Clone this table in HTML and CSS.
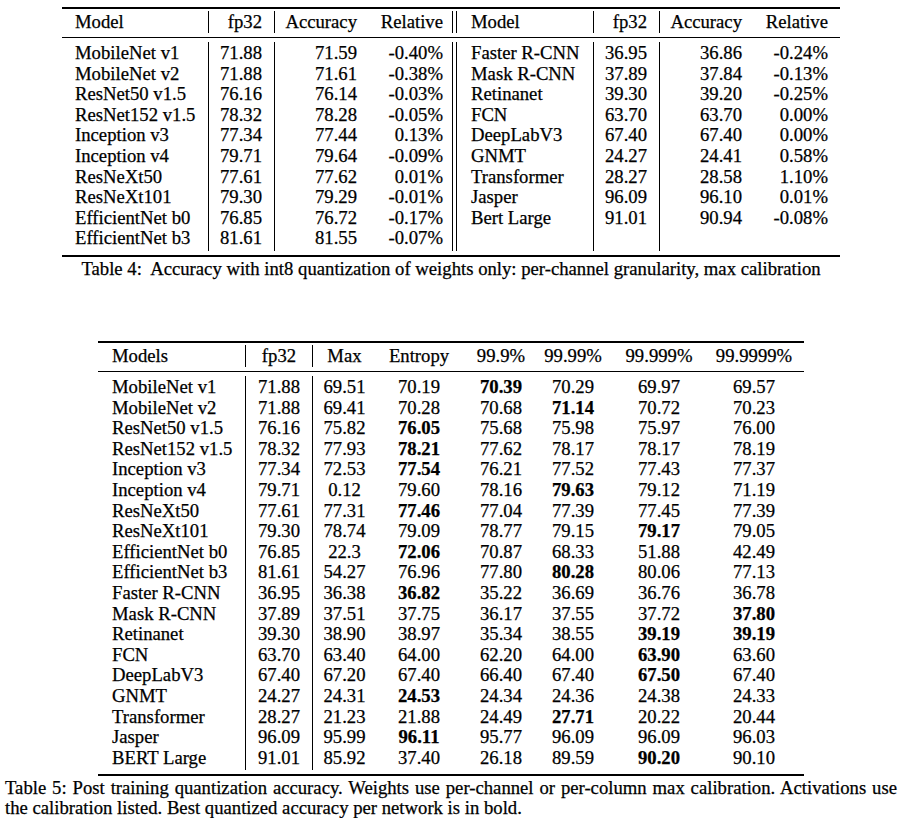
FILE: index.html
```html
<!DOCTYPE html>
<html>
<head>
<meta charset="utf-8">
<link rel="stylesheet" href="styles.css">
</head>
<body>
<div class="page">
  <div class="t4">
    <div class="rule thick top"></div>
    <div class="row head">
      <div class="m">Model</div><div class="r v">fp32</div><div class="r v">Accuracy</div><div class="r rl">Relative</div>
      <div class="dbl"></div>
      <div class="m m2">Model</div><div class="r v">fp32</div><div class="r v">Accuracy</div><div class="r">Relative</div>
    </div>
    <div class="rule mid"></div>
    <div class="row"><div class="m">MobileNet v1</div><div class="r v">71.88</div><div class="r v">71.59</div><div class="r rl">-0.40%</div><div class="dbl"></div><div class="m m2">Faster R-CNN</div><div class="r v">36.95</div><div class="r v">36.86</div><div class="r">-0.24%</div></div>
    <div class="row s"><div class="m">MobileNet v2</div><div class="r v">71.88</div><div class="r v">71.61</div><div class="r rl">-0.38%</div><div class="dbl"></div><div class="m m2">Mask R-CNN</div><div class="r v">37.89</div><div class="r v">37.84</div><div class="r">-0.13%</div></div>
    <div class="row"><div class="m">ResNet50 v1.5</div><div class="r v">76.16</div><div class="r v">76.14</div><div class="r rl">-0.03%</div><div class="dbl"></div><div class="m m2">Retinanet</div><div class="r v">39.30</div><div class="r v">39.20</div><div class="r">-0.25%</div></div>
    <div class="row s"><div class="m">ResNet152 v1.5</div><div class="r v">78.32</div><div class="r v">78.28</div><div class="r rl">-0.05%</div><div class="dbl"></div><div class="m m2">FCN</div><div class="r v">63.70</div><div class="r v">63.70</div><div class="r">0.00%</div></div>
    <div class="row"><div class="m">Inception v3</div><div class="r v">77.34</div><div class="r v">77.44</div><div class="r rl">0.13%</div><div class="dbl"></div><div class="m m2">DeepLabV3</div><div class="r v">67.40</div><div class="r v">67.40</div><div class="r">0.00%</div></div>
    <div class="row"><div class="m">Inception v4</div><div class="r v">79.71</div><div class="r v">79.64</div><div class="r rl">-0.09%</div><div class="dbl"></div><div class="m m2">GNMT</div><div class="r v">24.27</div><div class="r v">24.41</div><div class="r">0.58%</div></div>
    <div class="row s"><div class="m">ResNeXt50</div><div class="r v">77.61</div><div class="r v">77.62</div><div class="r rl">0.01%</div><div class="dbl"></div><div class="m m2">Transformer</div><div class="r v">28.27</div><div class="r v">28.58</div><div class="r">1.10%</div></div>
    <div class="row"><div class="m">ResNeXt101</div><div class="r v">79.30</div><div class="r v">79.29</div><div class="r rl">-0.01%</div><div class="dbl"></div><div class="m m2">Jasper</div><div class="r v">96.09</div><div class="r v">96.10</div><div class="r">0.01%</div></div>
    <div class="row s"><div class="m">EfficientNet b0</div><div class="r v">76.85</div><div class="r v">76.72</div><div class="r rl">-0.17%</div><div class="dbl"></div><div class="m m2">Bert Large</div><div class="r v">91.01</div><div class="r v">90.94</div><div class="r">-0.08%</div></div>
    <div class="row last"><div class="m">EfficientNet b3</div><div class="r v">81.61</div><div class="r v">81.55</div><div class="r rl">-0.07%</div><div class="dbl"></div><div class="m m2"></div><div class="r v"></div><div class="r v"></div><div class="r"></div></div>
    <div class="rule thick bot"></div>
  </div>
  <p class="cap4">Table 4:&nbsp; Accuracy with int8 quantization of weights only: per-channel granularity, max calibration</p>

  <div class="t5">
    <div class="rule thick top"></div>
    <div class="row head"><div class="m">Models</div><div class="c v">fp32</div><div class="c v">Max</div><div class="c">Entropy</div><div class="c">99.9%</div><div class="c">99.99%</div><div class="c">99.999%</div><div class="c">99.9999%</div><div></div></div>
    <div class="rule mid"></div>
    <div class="row"><div class="m">MobileNet v1</div><div class="c v">71.88</div><div class="c v">69.51</div><div class="c">70.19</div><div class="c b">70.39</div><div class="c">70.29</div><div class="c">69.97</div><div class="c">69.57</div><div></div></div>
    <div class="row s"><div class="m">MobileNet v2</div><div class="c v">71.88</div><div class="c v">69.41</div><div class="c">70.28</div><div class="c">70.68</div><div class="c b">71.14</div><div class="c">70.72</div><div class="c">70.23</div><div></div></div>
    <div class="row"><div class="m">ResNet50 v1.5</div><div class="c v">76.16</div><div class="c v">75.82</div><div class="c b">76.05</div><div class="c">75.68</div><div class="c">75.98</div><div class="c">75.97</div><div class="c">76.00</div><div></div></div>
    <div class="row s"><div class="m">ResNet152 v1.5</div><div class="c v">78.32</div><div class="c v">77.93</div><div class="c b">78.21</div><div class="c">77.62</div><div class="c">78.17</div><div class="c">78.17</div><div class="c">78.19</div><div></div></div>
    <div class="row"><div class="m">Inception v3</div><div class="c v">77.34</div><div class="c v">72.53</div><div class="c b">77.54</div><div class="c">76.21</div><div class="c">77.52</div><div class="c">77.43</div><div class="c">77.37</div><div></div></div>
    <div class="row"><div class="m">Inception v4</div><div class="c v">79.71</div><div class="c v">0.12</div><div class="c">79.60</div><div class="c">78.16</div><div class="c b">79.63</div><div class="c">79.12</div><div class="c">71.19</div><div></div></div>
    <div class="row s"><div class="m">ResNeXt50</div><div class="c v">77.61</div><div class="c v">77.31</div><div class="c b">77.46</div><div class="c">77.04</div><div class="c">77.39</div><div class="c">77.45</div><div class="c">77.39</div><div></div></div>
    <div class="row"><div class="m">ResNeXt101</div><div class="c v">79.30</div><div class="c v">78.74</div><div class="c">79.09</div><div class="c">78.77</div><div class="c">79.15</div><div class="c b">79.17</div><div class="c">79.05</div><div></div></div>
    <div class="row s"><div class="m">EfficientNet b0</div><div class="c v">76.85</div><div class="c v">22.3</div><div class="c b">72.06</div><div class="c">70.87</div><div class="c">68.33</div><div class="c">51.88</div><div class="c">42.49</div><div></div></div>
    <div class="row"><div class="m">EfficientNet b3</div><div class="c v">81.61</div><div class="c v">54.27</div><div class="c">76.96</div><div class="c">77.80</div><div class="c b">80.28</div><div class="c">80.06</div><div class="c">77.13</div><div></div></div>
    <div class="row"><div class="m">Faster R-CNN</div><div class="c v">36.95</div><div class="c v">36.38</div><div class="c b">36.82</div><div class="c">35.22</div><div class="c">36.69</div><div class="c">36.76</div><div class="c">36.78</div><div></div></div>
    <div class="row s"><div class="m">Mask R-CNN</div><div class="c v">37.89</div><div class="c v">37.51</div><div class="c">37.75</div><div class="c">36.17</div><div class="c">37.55</div><div class="c">37.72</div><div class="c b">37.80</div><div></div></div>
    <div class="row"><div class="m">Retinanet</div><div class="c v">39.30</div><div class="c v">38.90</div><div class="c">38.97</div><div class="c">35.34</div><div class="c">38.55</div><div class="c b">39.19</div><div class="c b">39.19</div><div></div></div>
    <div class="row s"><div class="m">FCN</div><div class="c v">63.70</div><div class="c v">63.40</div><div class="c">64.00</div><div class="c">62.20</div><div class="c">64.00</div><div class="c b">63.90</div><div class="c">63.60</div><div></div></div>
    <div class="row"><div class="m">DeepLabV3</div><div class="c v">67.40</div><div class="c v">67.20</div><div class="c">67.40</div><div class="c">66.40</div><div class="c">67.40</div><div class="c b">67.50</div><div class="c">67.40</div><div></div></div>
    <div class="row"><div class="m">GNMT</div><div class="c v">24.27</div><div class="c v">24.31</div><div class="c b">24.53</div><div class="c">24.34</div><div class="c">24.36</div><div class="c">24.38</div><div class="c">24.33</div><div></div></div>
    <div class="row s"><div class="m">Transformer</div><div class="c v">28.27</div><div class="c v">21.23</div><div class="c">21.88</div><div class="c">24.49</div><div class="c b">27.71</div><div class="c">20.22</div><div class="c">20.44</div><div></div></div>
    <div class="row"><div class="m">Jasper</div><div class="c v">96.09</div><div class="c v">95.99</div><div class="c b">96.11</div><div class="c">95.77</div><div class="c">96.09</div><div class="c">96.09</div><div class="c">96.03</div><div></div></div>
    <div class="row s last"><div class="m">BERT Large</div><div class="c v">91.01</div><div class="c v">85.92</div><div class="c">37.40</div><div class="c">26.18</div><div class="c">89.59</div><div class="c b">90.20</div><div class="c">90.10</div><div></div></div>
    <div class="rule thick bot"></div>
  </div>
  <p class="cap5">Table 5: Post training quantization accuracy. Weights use per-channel or per-column max calibration. Activations use the calibration listed. Best quantized accuracy per network is in bold.</p>
</div>
</body>
</html>
```

FILE: styles.css
```css
html, body {
  margin: 0;
  padding: 0;
  background: #fff;
}
body {
  font-family: "Liberation Serif", "Times New Roman", serif;
  font-size: 18.7px;
  line-height: 21px;
  color: #000;
  -webkit-text-stroke: 0.25px #000;
}
.page {
  width: 902px;
  padding-top: 7px;
}
.t4, .t5 {
  display: grid;
  margin: 0 auto;
}
.t4 {
  width: 778px;
  grid-template-columns: 146px 66px 95px 83px 5px 136px 66px 95px 86px;
}
.t5 {
  width: 706px;
  margin-top: 62px;
  grid-template-columns: 147px 67px 64px 86px 78px 66px 106px 84px 8px;
}
.row {
  display: contents;
}
.row > * {
  height: 21px;
  line-height: 21px;
}
.row.s > * {
  height: 20px;
}
.head > * {
  padding-bottom: 1px;
}
.last > * {
  padding-bottom: 3px;
}
.rule {
  grid-column: 1 / -1;
  background: #000;
  height: 1px;
}
.rule.thick {
  height: 2px;
}
.rule.top {
  margin-bottom: 2px;
}
.rule.mid {
  margin: 4px 0;
}
.rule.bot {
  margin-top: 4px;
}
.m {
  padding-left: 13px;
  white-space: nowrap;
}
.t5 .m,
.m2 {
  padding-left: 14px;
}
.r {
  text-align: right;
  padding-right: 12px;
  white-space: nowrap;
}
.rl {
  padding-right: 9px;
}
.c {
  text-align: center;
  white-space: nowrap;
}
.v {
  border-left: 1px solid #000;
}
.dbl {
  border-left: 1px solid #000;
  border-right: 1px solid #000;
}
.b {
  font-weight: bold;
}
.cap4 {
  margin: 0;
  padding-top: 1px;
  line-height: 21px;
  text-align: center;
}
.cap5 {
  margin: 0 0 0 5px;
  width: 892px;
  padding-top: 1.5px;
  line-height: 20px;
  text-align: justify;
}
```
